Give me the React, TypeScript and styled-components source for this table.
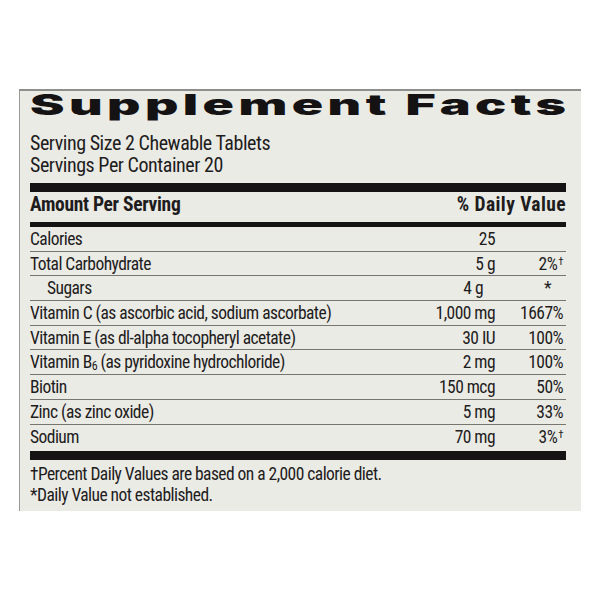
import React from "react";
import styled, { createGlobalStyle } from "styled-components";

const Global = createGlobalStyle`
  html, body { margin: 0; padding: 0; background: #ffffff; }
  body { width: 600px; height: 600px; overflow: hidden; }
`;

const FONT = `"Roboto Condensed", "Roboto", "Liberation Sans", sans-serif`;

const Panel = styled.div`
  margin: 89px 0 0 19px;
  width: 562px;
  height: 422px;
  box-sizing: border-box;
  border-top: 2px solid #8e8e8c;
  border-left: 1px solid #9a9a98;
  background: #ebebe6;
  padding: 0 15px 0 10px;
  color: #1e1c1c;
  font-family: ${FONT};
  font-stretch: condensed;
`;

const Title = styled.h1`
  margin: 0;
  height: 29px;
  line-height: 29px;
  font-family: "Inter", "Roboto", "Liberation Sans", sans-serif;
  font-stretch: normal;
  font-weight: 900;
  font-size: 28px;
  color: #141212;
  white-space: nowrap;
`;

const TitleText = styled.span`
  display: inline-block;
  letter-spacing: 2.4px;
  transform: scaleX(1.85);
  transform-origin: left center;
`;

const Info = styled.div`
  margin-top: 12px;
  font-size: 20px;
  line-height: 22px;
  letter-spacing: -0.45px;
`;

const ThickBar = styled.div<{ $h: number; $mt: number }>`
  height: ${(p) => p.$h}px;
  margin-top: ${(p) => p.$mt}px;
  background: #151313;
`;

const HeadRow = styled.div`
  display: flex;
  justify-content: space-between;
  font-weight: 700;
  font-size: 19.5px;
  line-height: 22px;
  margin-top: 2px;
`;

const HeadLabel = styled.span<{ $ls: number }>`
  letter-spacing: ${(p) => p.$ls}px;
`;

const Row = styled.div<{ $last?: boolean }>`
  display: flex;
  align-items: center;
  box-sizing: border-box;
  height: 24.7px;
  border-bottom: ${(p) => (p.$last ? "none" : "1px solid #76756f")};
  font-size: 17.5px;
  letter-spacing: -0.55px;
`;

const Name = styled.div<{ $indent?: boolean }>`
  flex: 1;
  padding-left: ${(p) => (p.$indent ? 17 : 0)}px;
  white-space: nowrap;
`;

const Amount = styled.div`
  text-align: right;
  white-space: nowrap;
`;

const DV = styled.div<{ $pr?: number }>`
  width: 68px;
  text-align: right;
  padding-right: ${(p) => p.$pr ?? 3}px;
  box-sizing: content-box;
  white-space: nowrap;
`;

const Dagger = styled.sup`
  font-size: 11px;
  vertical-align: 5px;
  line-height: 0;
  margin-left: 1px;
`;

const Sub = styled.sub`
  font-size: 12px;
  vertical-align: -2px;
  line-height: 0;
`;

const Notes = styled.div`
  margin-top: 4px;
  font-size: 17.5px;
  line-height: 21px;
  letter-spacing: -0.55px;
`;

type R = {
  name: React.ReactNode;
  amt: string;
  dv?: React.ReactNode;
  indent?: boolean;
  pr?: number;
};

const rows: R[] = [
  { name: "Calories", amt: "25" },
  { name: "Total Carbohydrate", amt: "5 g", dv: <>2%<Dagger>†</Dagger></>, pr: 3 },
  { name: "Sugars", amt: "4 g", dv: "*", indent: true, pr: 15 },
  { name: "Vitamin C (as ascorbic acid, sodium ascorbate)", amt: "1,000 mg", dv: "1667%" },
  { name: "Vitamin E (as dl-alpha tocopheryl acetate)", amt: "30 IU", dv: "100%" },
  { name: <>Vitamin B<Sub>6</Sub> (as pyridoxine hydrochloride)</>, amt: "2 mg", dv: "100%" },
  { name: "Biotin", amt: "150 mcg", dv: "50%" },
  { name: "Zinc (as zinc oxide)", amt: "5 mg", dv: "33%" },
  { name: "Sodium", amt: "70 mg", dv: <>3%<Dagger>†</Dagger></> },
];

export default function App() {
  return (
    <>
      <Global />
      <Panel>
        <Title>
          <TitleText>Supplement Facts</TitleText>
        </Title>
        <Info>
          Serving Size 2 Chewable Tablets
          <br />
          Servings Per Container 20
        </Info>
        <ThickBar $h={9} $mt={7} />
        <HeadRow>
          <HeadLabel $ls={-0.3}>Amount Per Serving</HeadLabel>
          <HeadLabel $ls={0.4}>% Daily Value</HeadLabel>
        </HeadRow>
        <ThickBar $h={5} $mt={6} />
        {rows.map((r, i) => (
          <Row key={i} $last={i === rows.length - 1}>
            <Name $indent={r.indent}>{r.name}</Name>
            <Amount>{r.amt}</Amount>
            <DV $pr={r.pr}>{r.dv ?? ""}</DV>
          </Row>
        ))}
        <ThickBar $h={9} $mt={2} />
        <Notes>
          †Percent Daily Values are based on a 2,000 calorie diet.
          <br />
          *Daily Value not established.
        </Notes>
      </Panel>
    </>
  );
}
